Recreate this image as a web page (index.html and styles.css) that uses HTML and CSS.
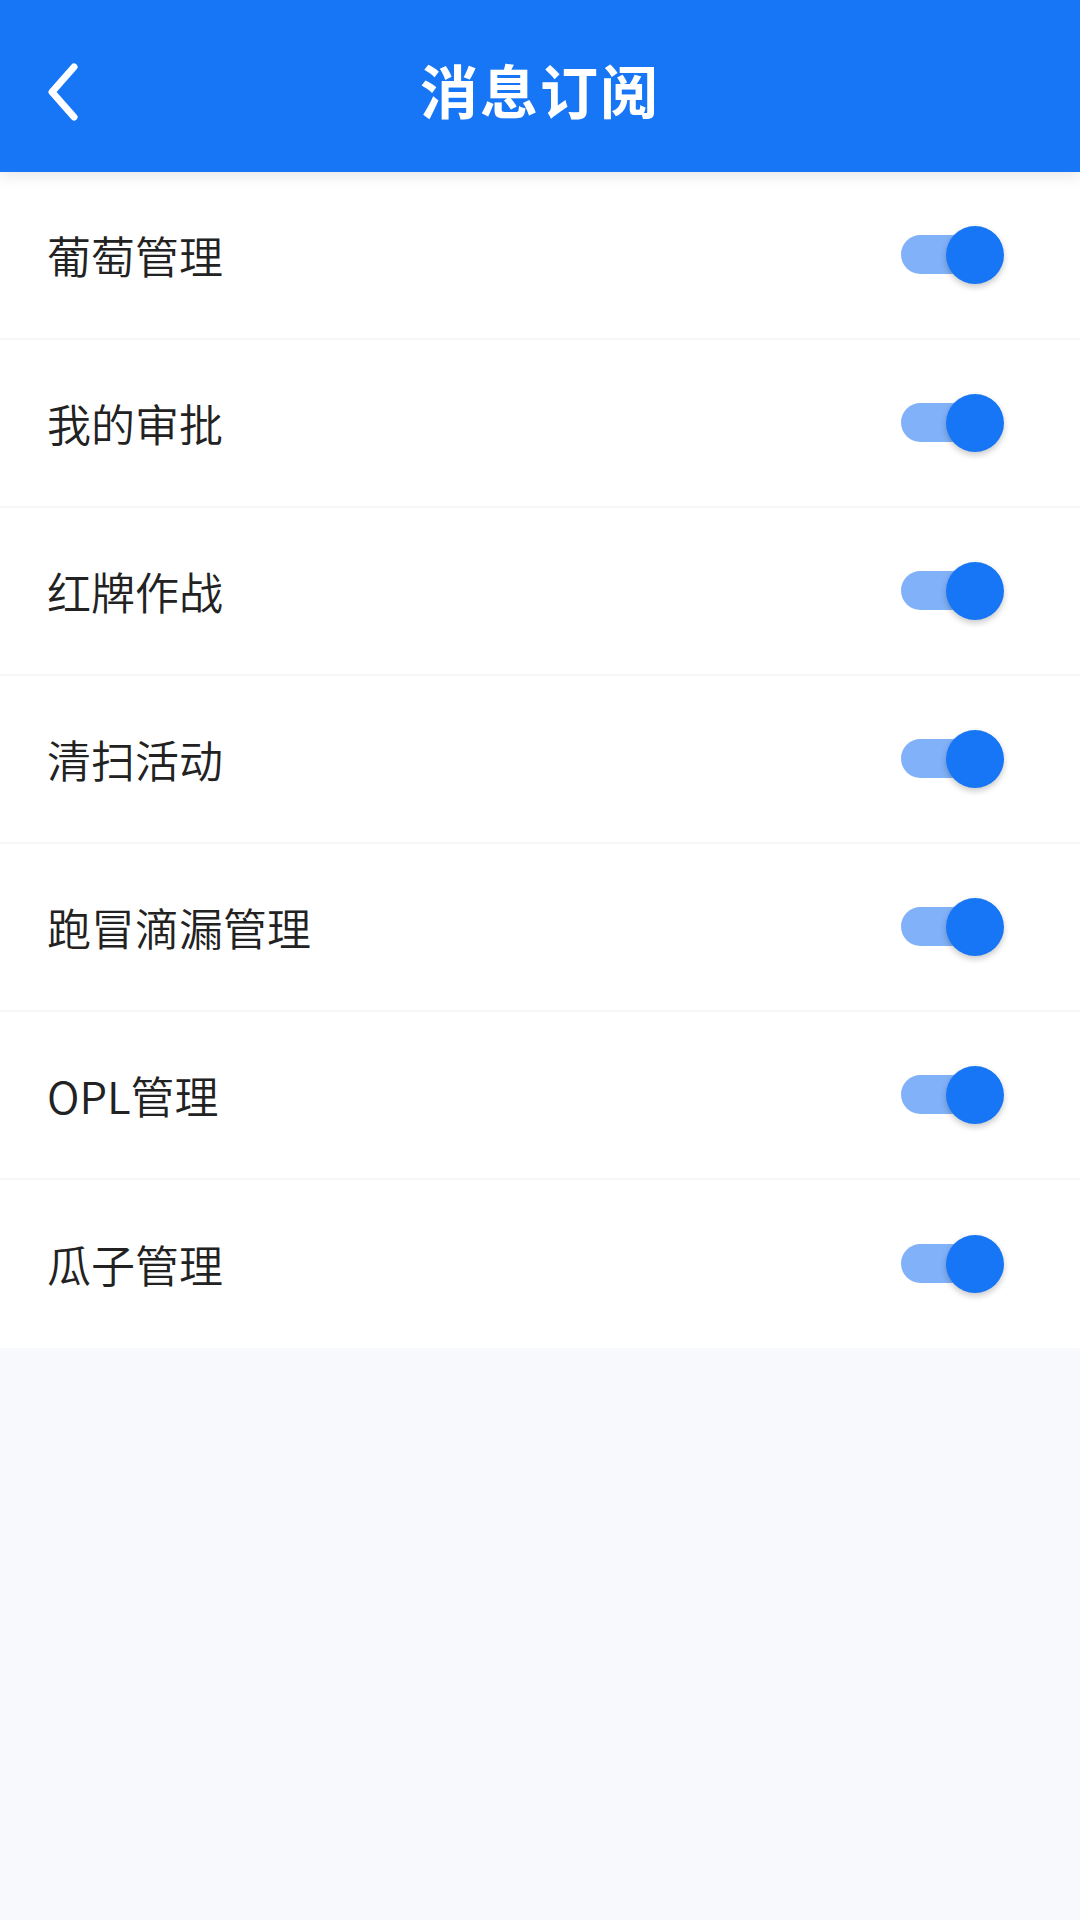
FILE: index.html
```html
<!DOCTYPE html>
<html lang="zh-CN">
<head>
  <meta charset="UTF-8" />
  <meta name="viewport" content="width=device-width, initial-scale=1.0"/>
  <title>消息订阅</title>
  <link rel="stylesheet" href="styles.css">
</head>
<body>
  <header class="topbar">
    <a class="back" href="#">
      <svg width="40" height="60" viewBox="0 0 40 60">
        <path d="M32 5 L10 30 L32 55" fill="none" stroke="#fff" stroke-width="7" stroke-linecap="round" stroke-linejoin="round"/>
      </svg>
    </a>
    <h1>消息订阅</h1>
  </header>

  <ul class="list">
    <li class="row"><span>葡萄管理</span><label class="switch"><input type="checkbox" checked><i></i></label></li>
    <li class="row"><span>我的审批</span><label class="switch"><input type="checkbox" checked><i></i></label></li>
    <li class="row"><span>红牌作战</span><label class="switch"><input type="checkbox" checked><i></i></label></li>
    <li class="row"><span>清扫活动</span><label class="switch"><input type="checkbox" checked><i></i></label></li>
    <li class="row"><span>跑冒滴漏管理</span><label class="switch"><input type="checkbox" checked><i></i></label></li>
    <li class="row"><span>OPL管理</span><label class="switch"><input type="checkbox" checked><i></i></label></li>
    <li class="row"><span>瓜子管理</span><label class="switch"><input type="checkbox" checked><i></i></label></li>
  </ul>
</body>
</html>
```

FILE: styles.css
```css
:root {
  --blue: #1676f6;
  --blue-light: #80b1f9;
  --bg: #f7f9fc;
  --text: #222;
}

body {
  margin: 0;
  min-height: 1920px;
  background: var(--bg);
  font-family: "Noto Sans CJK SC", "Noto Sans", sans-serif;
  color: var(--text);
}

.topbar {
  position: relative;
  height: 172px;
  background: var(--blue);
  display: flex;
  align-items: center;
  justify-content: center;
  box-shadow: 0 4px 14px rgba(0, 0, 0, 0.1);
  z-index: 2;
}

.topbar h1 {
  margin: 0;
  padding-top: 6px;
  color: #fff;
  font-size: 58px;
  font-weight: 700;
  letter-spacing: 2px;
}

.back {
  position: absolute;
  left: 42px;
  top: 62px;
  display: block;
  line-height: 0;
}

.list {
  list-style: none;
  margin: 0;
  padding: 0;
  background: #fff;
}

.row {
  height: 166px;
  display: flex;
  align-items: center;
  justify-content: space-between;
  padding: 0 75px 0 47px;
  border-bottom: 2px solid #f5f6f8;
  font-size: 44px;
  font-weight: 350;
}

.row:last-child {
  border-bottom: none;
  height: 168px;
}

.switch {
  position: relative;
  width: 104px;
  height: 60px;
  display: block;
}

.switch input {
  display: none;
}

.switch i::before {
  content: "";
  position: absolute;
  left: 0;
  top: 10px;
  width: 90px;
  height: 39px;
  border-radius: 20px;
  background: var(--blue-light);
}

.switch i::after {
  content: "";
  position: absolute;
  left: 45px;
  top: 1px;
  width: 58px;
  height: 58px;
  border-radius: 50%;
  background: var(--blue);
  box-shadow: 0 3px 6px rgba(0, 0, 0, 0.22);
}
```
